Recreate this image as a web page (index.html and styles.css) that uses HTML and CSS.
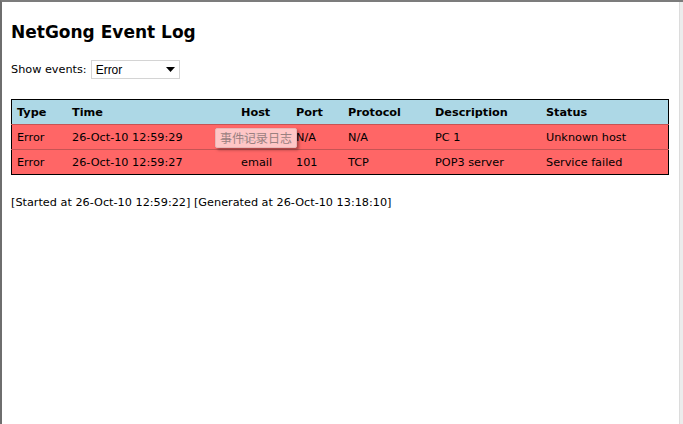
FILE: index.html
```html
<!DOCTYPE html>
<html>
<head>
  <title>NetGong Event Log</title>
  <link rel="stylesheet" href="styles.css">
</head>
<body>
  <div class="frame">
    <div class="page">
      <h2>NetGong Event Log</h2>

      <div class="filter">
        <label for="events">Show events:</label>
        <div class="select">
          <span>Error</span>
          <svg width="9" height="5" viewBox="0 0 9 5"><path d="M0 0h9L4.5 5z" fill="#000"/></svg>
        </div>
      </div>

      <div class="log">
        <table>
          <tr class="head">
            <th class="c-type">Type</th>
            <th class="c-time">Time</th>
            <th class="c-host">Host</th>
            <th class="c-port">Port</th>
            <th class="c-proto">Protocol</th>
            <th class="c-desc">Description</th>
            <th>Status</th>
          </tr>
          <tr>
            <td>Error</td>
            <td>26-Oct-10 12:59:29</td>
            <td class="c-host">pc1</td>
            <td>N/A</td>
            <td>N/A</td>
            <td>PC 1</td>
            <td>Unknown host</td>
          </tr>
          <tr>
            <td>Error</td>
            <td>26-Oct-10 12:59:27</td>
            <td class="c-host">email</td>
            <td>101</td>
            <td>TCP</td>
            <td>POP3 server</td>
            <td>Service failed</td>
          </tr>
        </table>
        <div class="tooltip">事件记录日志</div>
      </div>

      <p class="stamp">[Started at 26-Oct-10 12:59:22] [Generated at 26-Oct-10 13:18:10]</p>
    </div>
    <div class="gutter"></div>
  </div>
</body>
</html>
```

FILE: styles.css
```css
html, body {
  height: 100%;
}

body {
  margin: 0;
  font-family: "DejaVu Sans", Verdana, sans-serif;
  font-size: 11.25px;
  color: #000;
  background: #fff;
}

.frame {
  display: flex;
  height: 100%;
  box-sizing: border-box;
  border-top: 2px solid #7c7c7c;
  border-left: 2px solid #6e6e6e;
}

.page {
  flex: 1;
  padding: 0 10px 0 9px;
}

.gutter {
  width: 3px;
  background: #ececec;
  border-left: 1px solid #dcdcdc;
}

h2 {
  font-size: 17px;
  font-weight: bold;
  margin: 20px 0 0;
}

.filter {
  display: flex;
  align-items: center;
  gap: 4px;
  margin-top: 18px;
}

.select {
  width: 89px;
  height: 19px;
  box-sizing: border-box;
  border: 1px solid #d4d4d4;
  display: flex;
  align-items: center;
  justify-content: space-between;
  padding: 0 4px 0 4px;
  font-family: "Liberation Sans", Arial, sans-serif;
  font-size: 12px;
}

.log {
  position: relative;
  margin-top: 20px;
}

table {
  width: 100%;
  border: 1px solid #000;
  border-collapse: collapse;
}

th, td {
  text-align: left;
  padding: 0 5px;
  height: 24px;
}

.head {
  background: #add8e6;
}

th {
  font-weight: bold;
}

td {
  background: #ff6666;
  border-top: 1px solid #c65454;
}

.c-type { width: 45px; }
.c-time { width: 159px; }
.c-host { width: 45px; }
.c-port { width: 42px; }
.c-proto { width: 77px; }
.c-desc { width: 101px; }

.tooltip {
  position: absolute;
  left: 204px;
  top: 29px;
  padding: 2px 4px;
  border: 1px solid #e7b7b7;
  border-radius: 2px;
  background: rgba(255, 222, 222, 0.8);
  box-shadow: 2px 2px 3px rgba(0, 0, 0, 0.35);
  color: #9a8080;
  font-family: "Noto Sans CJK SC", sans-serif;
  font-size: 12px;
  line-height: 14px;
}

.stamp {
  margin: 21px 0 0;
}
```
